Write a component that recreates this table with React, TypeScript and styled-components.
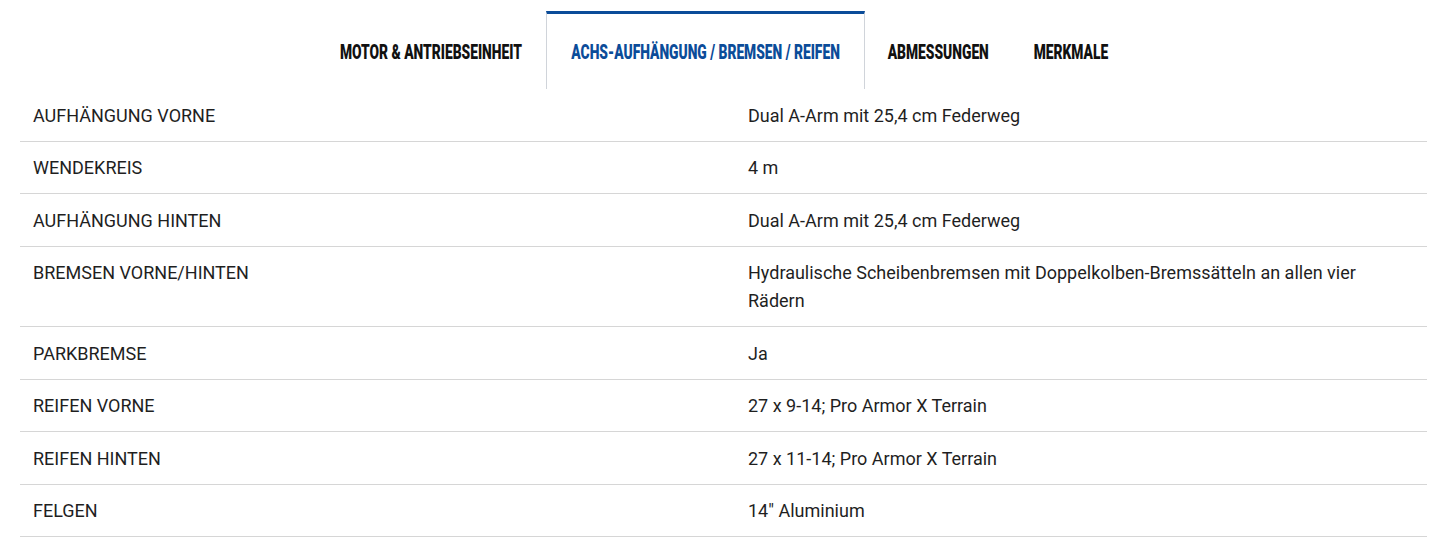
import { FC } from 'react';
import styled, { createGlobalStyle } from 'styled-components';

// widths of the condensed tab captions in the design
const TABS = [
  { title: 'MOTOR & ANTRIEBSEINHEIT', width: 182 },
  { title: 'ACHS-AUFHÄNGUNG / BREMSEN / REIFEN', width: 271 },
  { title: 'ABMESSUNGEN', width: 98 },
  { title: 'MERKMALE', width: 72 },
];

const ROWS = [
  ['AUFHÄNGUNG VORNE', 'Dual A-Arm mit 25,4 cm Federweg'],
  ['WENDEKREIS', '4 m'],
  ['AUFHÄNGUNG HINTEN', 'Dual A-Arm mit 25,4 cm Federweg'],
  ['BREMSEN VORNE/HINTEN', 'Hydraulische Scheibenbremsen mit Doppelkolben-Bremssätteln an allen vier Rädern'],
  ['PARKBREMSE', 'Ja'],
  ['REIFEN VORNE', '27 x 9-14; Pro Armor X Terrain'],
  ['REIFEN HINTEN', '27 x 11-14; Pro Armor X Terrain'],
  ['FELGEN', '14" Aluminium'],
];

const App: FC = () => (
  <>
    <GlobalStyle />
    <Page>
      <TabBar>
        {TABS.map((t, i) => (
          <Tab key={t.title} $active={i === 1} $width={t.width}>
            <TabText>{t.title}</TabText>
          </Tab>
        ))}
      </TabBar>
      <SpecTable>
        {ROWS.map(([label, value]) => (
          <Row key={label}>
            <Label>{label}</Label>
            <Value>{value}</Value>
          </Row>
        ))}
      </SpecTable>
    </Page>
  </>
);

export default App;

const GlobalStyle = createGlobalStyle`
  body {
    margin: 0;
    background: #fff;
    font-family: Roboto, "Liberation Sans", sans-serif;
    color: #1f1f1f;
  }
`;

const Page = styled.div`
  padding: 0 18px 0 20px;
`;

const TabBar = styled.div`
  display: flex;
  justify-content: center;
  padding-top: 11px;
`;

const Tab = styled.div<{ $active?: boolean; $width: number }>`
  box-sizing: border-box;
  height: 78px;
  width: ${(p) => p.$width + 48}px;
  display: flex;
  align-items: center;
  justify-content: center;
  font-family: Roboto, "Liberation Sans", sans-serif;
  font-weight: 900;
  font-size: 20px;
  color: ${(p) => (p.$active ? '#0b4c99' : '#111')};
  border-top: 3px solid ${(p) => (p.$active ? '#0b4c99' : 'transparent')};
  border-left: 1px solid ${(p) => (p.$active ? '#d0d4da' : 'transparent')};
  border-right: 1px solid ${(p) => (p.$active ? '#d0d4da' : 'transparent')};
`;

const TabText = styled.span`
  display: inline-block;
  white-space: nowrap;
  transform: scaleX(0.69);
  transform-origin: center;
`;

const SpecTable = styled.div`
  display: flex;
  flex-direction: column;
`;

const Row = styled.div`
  display: grid;
  grid-template-columns: 715px 1fr;
  border-bottom: 1px solid #d6d6d6;
  padding: 12.5px 0 11px;
  font-size: 18px;
  line-height: 28px;
`;

const Label = styled.div`
  padding-left: 13px;
  text-transform: uppercase;
`;

const Value = styled.div`
  padding-left: 13px;
  padding-right: 40px;
`;
